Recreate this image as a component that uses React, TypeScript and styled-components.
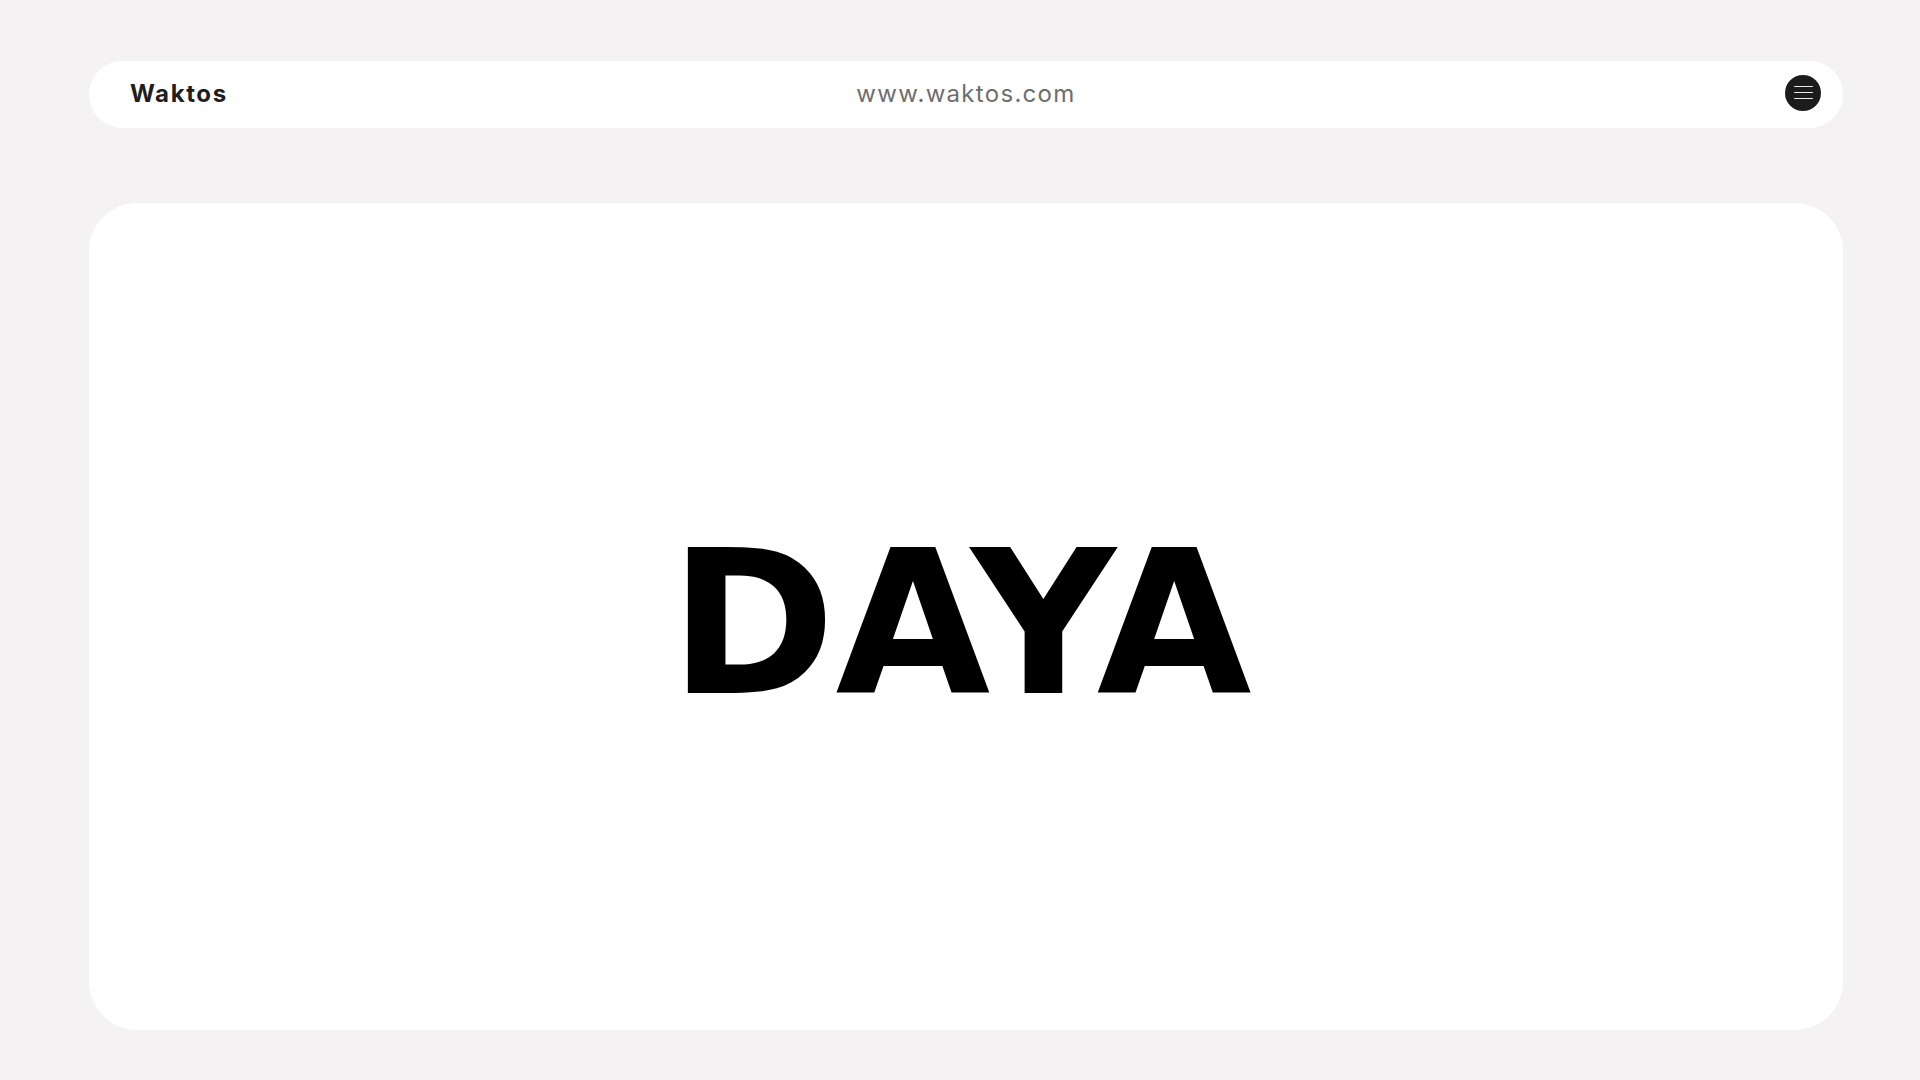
import React from "react";
import styled, { createGlobalStyle } from "styled-components";

const GlobalStyle = createGlobalStyle`
  html, body {
    margin: 0;
    padding: 0;
    background: #f4f2f2;
    overflow: hidden;
  }
  body {
    font-family: "Inter", "Liberation Sans", sans-serif;
  }
  *, *::before, *::after {
    box-sizing: border-box;
  }
`;

const Page = styled.div`
  width: 100%;
  height: 1080px;
  padding: 61px 77px 50px 89px;
  display: flex;
  flex-direction: column;
  gap: 75px;
  background: #f4f2f2;
`;

const TopBar = styled.header`
  height: 67px;
  flex: 0 0 auto;
  background: #ffffff;
  border-radius: 34px;
  display: grid;
  grid-template-columns: 1fr auto 1fr;
  align-items: center;
  padding: 0 22px;
`;

const Brand = styled.div`
  padding-left: 19px;
  margin-top: -2px;
  font-family: "Inter", "Liberation Sans", sans-serif;
  font-weight: 700;
  font-size: 24px;
  color: #1e1e1e;
  letter-spacing: 1.6px;
`;

const Url = styled.div`
  margin-top: -2px;
  font-family: "Inter", "Liberation Sans", sans-serif;
  font-weight: 400;
  font-size: 24px;
  color: #6e6e6e;
  letter-spacing: 1.3px;
`;

const MenuButton = styled.button`
  justify-self: end;
  margin-top: -4px;
  width: 36px;
  height: 36px;
  border-radius: 50%;
  border: none;
  padding: 0;
  background: #1c1c1c;
  display: flex;
  flex-direction: column;
  align-items: center;
  justify-content: center;
  gap: 4.5px;
  cursor: pointer;
`;

const MenuLine = styled.span`
  display: block;
  width: 19px;
  height: 1.5px;
  background: #e8e8e8;
  border-radius: 1px;
`;

const Stage = styled.main`
  flex: 1 1 auto;
  background: #ffffff;
  border-radius: 48px;
  display: flex;
  align-items: center;
  justify-content: center;
  padding: 14px 11px 0 0;
`;

const Title = styled.h1`
  margin: 0;
  font-family: "DejaVu Sans", "Liberation Sans", sans-serif;
  font-weight: 700;
  font-size: 200px;
  line-height: 1;
  color: #000000;
`;

export default function App() {
  return (
    <>
      <GlobalStyle />
      <Page>
        <TopBar>
          <Brand>Waktos</Brand>
          <Url>www.waktos.com</Url>
          <MenuButton aria-label="Menu">
            <MenuLine />
            <MenuLine />
            <MenuLine />
          </MenuButton>
        </TopBar>
        <Stage>
          <Title>DAYA</Title>
        </Stage>
      </Page>
    </>
  );
}
